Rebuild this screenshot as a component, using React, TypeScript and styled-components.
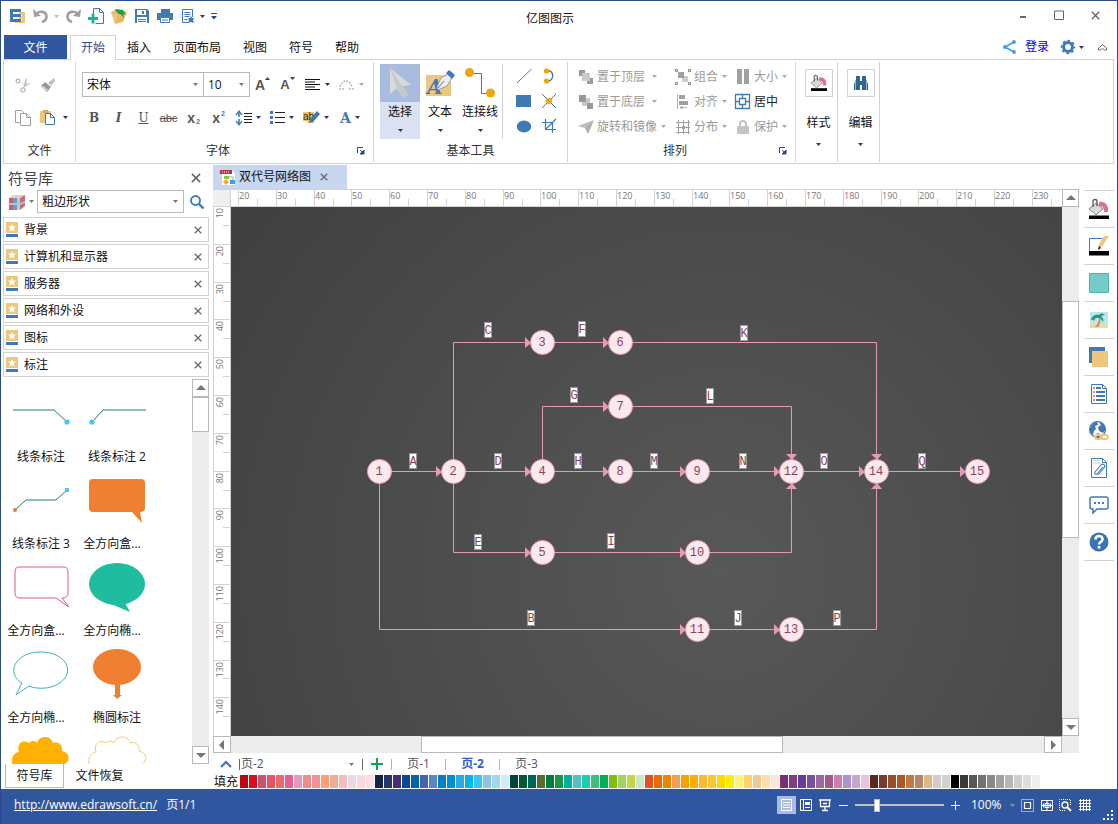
import React, { useLayoutEffect, useRef, useState } from "react";
import styled, { createGlobalStyle, css } from "styled-components";

const c = {
  navy: "#2b4a8c",
  blue: "#3156a0",
  icon: "#407ab5",
  line: "#d3d3d3",
  edge: "#b9b9b9",
  gray: "#a0a0a0",
  sand: "#eec77e",
  track: "#ececec",
};

const GlobalStyle = createGlobalStyle`
  *, *::before, *::after { box-sizing: border-box; }
  body {
    margin: 0;
    background: #fff;
    color: #111;
    font: 12px/16px "Open Sans", "Noto Sans CJK SC", sans-serif;
  }
  button, select, input { font: inherit; color: inherit; margin: 0; padding: 0; }
  button { background: none; border: 0; }
  svg { display: block; flex: none; overflow: visible; }
`;

/* ---------- shell ---------- */

const Window = styled.div`
  height: 100vh;
  min-height: 600px;
  display: flex;
  flex-direction: column;
  border: 1px solid ${c.navy};
  border-bottom: 0;
  background: #fff;
`;

const TitleBar = styled.header`
  display: grid;
  grid-template-columns: 1fr auto 1fr;
  align-items: center;
  height: 34px;
`;

const QuickAccess = styled.div`
  display: flex;
  align-items: center;
  padding: 0 0 4px 5px;
`;

const AppTitle = styled.h1`
  margin: 0;
  padding: 2px 18px 0 0;
  font-size: 12px;
  font-weight: 400;
`;

const WindowControls = styled.div`
  display: flex;
  justify-content: flex-end;
  padding: 0 4px 6px 0;
`;

const IconButton = styled.button<{ $w?: number; $h?: number; $tight?: boolean }>`
  display: flex;
  align-items: center;
  justify-content: center;
  gap: ${(p) => (p.$tight ? 0 : 4)}px;
  width: ${(p) => p.$w ?? 23}px;
  height: ${(p) => p.$h ?? 24}px;
`;

const TabRow = styled.nav`
  display: flex;
  align-items: center;
  height: 24px;
  padding: 0 8px 0 3px;
  position: relative;
  z-index: 1;
`;

const FileTab = styled.button`
  width: 63px;
  height: 24px;
  margin-right: 3px;
  padding-top: 1px;
  background: ${c.blue};
  color: #fff;
`;

const RibbonTab = styled.button<{ $active?: boolean }>`
  height: 25px;
  padding: 2px 11px 0;
  border: 0 solid ${c.line};
  ${(p) =>
    p.$active &&
    css`
      padding: 1px 10px 0;
      border-width: 1px 1px 0;
      background: #fff;
      color: ${c.navy};
    `}
`;

const TabRowEnd = styled.div`
  display: flex;
  align-items: center;
  gap: 9px;
  margin-left: auto;
`;

const LoginLink = styled.a`
  color: #0000f0;
  text-decoration: none;
`;

/* ---------- ribbon ---------- */

const Ribbon = styled.section`
  display: flex;
  height: 105px;
  margin: 0 3px 0 2px;
  padding: 2px 0 1px;
  border: 1px solid ${c.line};
`;

const Group = styled.div`
  display: flex;
  flex-direction: column;
  border-right: 1px solid ${c.line};
`;

const GroupTools = styled.div<{ $pad: string }>`
  display: flex;
  height: 77px;
  padding: ${(p) => p.$pad};
`;

const GroupLabel = styled.div<{ $launcher?: boolean }>`
  display: flex;
  align-items: center;
  height: 23px;
  padding: 1px 0 0 ${(p) => (p.$launcher ? 11 : 0)}px;
  color: #333;
  & > span {
    flex: 1;
    text-align: center;
  }
`;

const Rows = styled.div`
  display: flex;
  flex-direction: column;
`;

const Row = styled.div`
  display: flex;
  align-items: center;
  height: 33px;
`;

const SelectBox = styled.span<{ $w: number; $h: number; $plain?: boolean }>`
  display: grid;
  align-items: center;
  width: ${(p) => p.$w}px;
  height: ${(p) => p.$h}px;
  border: ${(p) => (p.$plain ? "0" : `1px solid ${c.edge}`)};
  & + & {
    border-left: 0;
  }
  & > * {
    grid-area: 1 / 1;
  }
  & > select {
    padding-left: ${(p) => (p.$plain ? 1 : 4)}px;
  }
  & > svg {
    justify-self: end;
    margin-right: ${(p) => (p.$plain ? 8 : 5)}px;
    pointer-events: none;
  }
`;

const NativeSelect = styled.select`
  appearance: none;
  width: 100%;
  height: 100%;
  border: 0;
  background: transparent;
`;

const Glyph = styled.span<{ $serif?: boolean; $bold?: boolean; $size?: number; $color?: string; $mark?: string; $italic?: boolean }>`
  font-family: ${(p) => (p.$serif ? '"DejaVu Serif", serif' : '"Liberation Sans", sans-serif')};
  font-size: ${(p) => p.$size ?? 12}px;
  font-weight: ${(p) => (p.$bold ? 700 : 400)};
  font-style: ${(p) => (p.$italic ? "italic" : "normal")};
  color: ${(p) => p.$color ?? "#555"};
  text-decoration: ${(p) => p.$mark ?? "none"};
`;

const Script = styled(Glyph)`
  line-height: 8px;
  align-self: center;
`;

const ScriptButton = styled(IconButton)<{ $up?: boolean }>`
  gap: 1px;
  ${Script} {
    padding: ${(p) => (p.$up ? "0 0 8px" : "8px 0 0")};
  }
`;

const BigTool = styled.button<{ $on?: boolean }>`
  display: grid;
  grid-template-rows: 38px 20px 17px;
  justify-items: center;
  align-items: center;
  width: 40px;
  height: 75px;
  white-space: nowrap;
  background: ${(p) => (p.$on ? "linear-gradient(#a9bbde 38px, #d9e1f3 38px)" : "none")};
`;

const ShapeGrid = styled.div`
  display: grid;
  grid-template-columns: repeat(2, 25px);
  grid-auto-rows: 25px;
  margin-left: 2px;
  padding-left: 8px;
  border-left: 1px solid ${c.line};
`;

const ArrangeGrid = styled.div`
  display: grid;
  grid-template-columns: 97px 60px 56px;
  grid-auto-rows: 25px;
`;

const ArrangeButton = styled.button<{ $live?: boolean; $min?: number }>`
  display: grid;
  grid-template-columns: 17px auto 9px;
  justify-content: start;
  align-items: center;
  column-gap: 2px;
  color: ${(p) => (p.$live ? "#222" : "#9a9a9a")};
  text-align: left;
  white-space: nowrap;
  & > span {
    min-width: ${(p) => p.$min ?? 0}px;
    padding-left: 1px;
  }
  & > svg {
    justify-self: center;
  }
`;

const TallTool = styled.button`
  display: grid;
  grid-template-rows: 28px 52px 0;
  align-content: start;
  justify-items: center;
  align-items: center;
  width: 41px;
  height: 77px;
  padding: 7px 0 0 4px;
  & > svg {
    margin-top: -10px;
  }
`;

const Tile = styled.span`
  display: grid;
  place-items: center;
  width: 28px;
  height: 28px;
  border: 1px solid ${c.line};
`;

/* ---------- body ---------- */

const Body = styled.main`
  flex: 1;
  min-height: 0;
  display: flex;
  padding: 0 3px 0 2px;
`;

const Library = styled.aside`
  width: 206px;
  margin-right: 4px;
  display: flex;
  flex-direction: column;
`;

const LibraryHeader = styled.div`
  display: flex;
  align-items: center;
  justify-content: space-between;
  height: 26px;
  padding: 2px 5px 0;
`;

const LibraryTitle = styled.h2`
  margin: 0;
  font-size: 15px;
  font-weight: 400;
  color: #444;
`;

const LibrarySearch = styled.div`
  display: flex;
  align-items: center;
  height: 23px;
  margin-bottom: 4px;
  padding-left: 2px;
`;

const CategoryList = styled.ul`
  display: grid;
  gap: 2px;
  margin: 0 0 2px;
  padding: 0;
  list-style: none;
`;

const Category = styled.li`
  display: flex;
  align-items: center;
  gap: 6px;
  height: 25px;
  padding: 0 0 0 2px;
  border: 1px solid ${c.line};
  & > button {
    margin-left: auto;
  }
`;

const ShapePane = styled.div`
  flex: 1;
  min-height: 0;
  display: flex;
  justify-content: space-between;
`;

const ShapeList = styled.div`
  display: grid;
  grid-template-columns: repeat(2, 76px);
  grid-auto-rows: 87px;
  align-content: start;
  padding-top: 4px;
  overflow: hidden;
`;

const ShapeCell = styled.figure`
  margin: 0;
  text-align: center;
`;

const ShapeName = styled.figcaption<{ $cut?: boolean }>`
  line-height: 20px;
  padding-right: ${(p) => (p.$cut ? 10 : 0)}px;
`;

const PanelTabs = styled.div`
  display: flex;
  height: 25px;
  padding: 0 2px 1px;
`;

const PanelTab = styled.button<{ $active?: boolean }>`
  width: ${(p) => (p.$active ? 59 : 71)}px;
  border: 0 solid ${c.edge};
  border-width: ${(p) => (p.$active ? "0 1px 1px" : "0")};
`;

const Workspace = styled.section`
  flex: 1;
  min-width: 0;
  display: flex;
  flex-direction: column;
  padding-top: 1px;
`;

const DocTab = styled.div`
  display: flex;
  align-items: center;
  width: 134px;
  height: 24px;
  padding-left: 7px;
  gap: 3px;
  background: #c7d7f0;
  white-space: nowrap;
`;

const Stage = styled.div`
  flex: 1;
  min-height: 0;
  display: grid;
  grid-template: 18px minmax(0, 1fr) 17px / 18px minmax(0, 1fr) 17px;
`;

const RulerCorner = styled.div`
  background: #efefef;
  border: solid ${c.line};
  border-width: 1px 1px 1px 0;
`;

const Ruler = styled.svg`
  width: 100%;
  height: 100%;
  overflow: hidden;
  font: 9px "Open Sans", sans-serif;
  fill: #777;
`;

const Canvas = styled.div`
  overflow: hidden;
  background: radial-gradient(circle at 59% 69%, #585858, #4e4e4e 260px, #404040 600px);
`;

const Diagram = styled.svg`
  width: 100%;
  height: 100%;
  overflow: hidden;
  font: 12px "Liberation Mono", monospace;
`;

const ScrollV = styled.div`
  display: flex;
  flex-direction: column;
  width: 17px;
  background: ${c.track};
`;

const ScrollH = styled.div`
  display: flex;
  height: 17px;
  background: ${c.track};
`;

const VScrollArea = styled(ScrollV)`
  grid-area: 1 / 3 / 3 / 4;
`;

const HScrollArea = styled(ScrollH)`
  grid-area: 3 / 1 / 4 / 3;
`;

const ScrollCorner = styled.div`
  grid-area: 3 / 3;
  background: ${c.track};
`;

const ScrollEnd = styled.button`
  display: grid;
  place-items: center;
  flex: 0 0 18px;
  border: 1px solid ${c.edge};
  background: #fff;
`;

const Grow = styled.div<{ $n: number; $thumb?: boolean }>`
  flex: ${(p) => p.$n} 1 0;
  ${(p) => p.$thumb && `background: #fff; border: 1px solid ${c.edge};`}
`;

const PageRow = styled.div`
  display: flex;
  align-items: center;
  height: 21px;
  padding-top: 1px;
  color: #555;
`;

const Bar = styled.i<{ $dark?: boolean }>`
  width: 1px;
  height: 11px;
  background: ${(p) => (p.$dark ? "#666" : "#b5b5b5")};
`;

const PageTab = styled.button<{ $active?: boolean }>`
  width: 53px;
  color: ${(p) => (p.$active ? "#2f5ec4" : "#555")};
  font-weight: ${(p) => (p.$active ? 700 : 400)};
`;

const Palette = styled.div`
  display: flex;
  align-items: center;
  height: 15px;
  overflow: hidden;
  white-space: nowrap;
`;

const PaletteLabel = styled.span`
  width: 27px;
  padding-left: 1px;
`;

const Swatch = styled.button<{ $color: string }>`
  flex: 0 0 8px;
  height: 13px;
  margin-right: 1px;
  background: ${(p) => p.$color};
`;

const SideTools = styled.aside`
  width: 30px;
  margin: 26px 0 0 5px;
  border-top: 1px solid ${c.line};
`;

const SideTool = styled.button`
  display: grid;
  place-items: center;
  width: 30px;
  height: 37px;
  border-bottom: 1px solid ${c.line};
`;

const StatusBar = styled.footer`
  display: flex;
  align-items: center;
  height: 35px;
  padding: 0 2px 3px 13px;
  background: ${c.blue};
  color: #fff;
`;

const SiteLink = styled.a`
  margin-right: 9px;
  color: #fff;
`;

const StatusTools = styled.div`
  display: flex;
  align-items: center;
  margin-left: auto;
`;

const StatusButton = styled.button<{ $on?: boolean }>`
  display: grid;
  place-items: center;
  width: 19px;
  height: 18px;
  background: ${(p) => (p.$on ? "#a9bbde" : "none")};
`;

const Zoom = styled.input`
  appearance: none;
  width: 89px;
  height: 14px;
  margin: 0 2px;
  background: linear-gradient(#c0c0c0, #c0c0c0) center / 100% 2px no-repeat;
  &::-webkit-slider-thumb {
    appearance: none;
    width: 6px;
    height: 13px;
    background: #fff;
    border: 1px solid #c0c0c0;
  }
`;

const ZoomLevel = styled.span`
  width: 37px;
  padding-left: 6px;
  margin-right: 8px;
`;

const ZoomCaret = styled.span`
  margin-right: 3px;
`;

const Grip = styled.div`
  align-self: flex-end;
  margin-left: 9px;
`;

/* ---------- icons ---------- */

type IcoProps = { w?: number; h?: number; children: React.ReactNode };
const Ico = ({ w = 16, h = 16, children }: IcoProps) => (
  <svg width={w} height={h} viewBox={`0 0 ${w} ${h}`} fill="none" aria-hidden="true">
    {children}
  </svg>
);

const Caret = ({ color = "#22386f" }: { color?: string }) => (
  <Ico w={5} h={3}><path d="M0 0h5L2.5 3z" fill={color} /></Ico>
);

const Close = ({ size = 9, color = "#666" }: { size?: number; color?: string }) => (
  <svg width={size} height={size} viewBox="0 0 9 9" stroke={color} strokeWidth="1.4" aria-hidden="true">
    <path d="M.8.8l7.4 7.4M8.2.8L.8 8.2" />
  </svg>
);

const Logo = () => (
  <Ico w={16}>
    <path d="M9 4h6v11H5v-2.500h7V11H9V8.500h3V6.500H9z" fill={c.sand} />
    <path d="M0 1h11v3H3v2h8v3H3v2h8v3H0z" fill={c.icon} />
  </Ico>
);
const Undo = ({ flip }: { flip?: boolean }) => (
  <Ico>
    <g transform={flip ? "matrix(-1 0 0 1 16 0)" : undefined}>
      <path d="M0 1l1 8 7-1z" fill={c.gray} />
      <path d="M3 6C6 2.500 13.500 3 13.500 8.500c0 2.500-1.500 4.500-4.500 5.500" stroke={c.gray} strokeWidth="2.600" />
    </g>
  </Ico>
);
const NewDoc = () => (
  <Ico>
    <path d="M5.500 6V.500h6l4 4v11h-8M11.500.500v4h4" stroke={c.icon} />
    <path d="M0 10.500h10M5 5.500v10" stroke="#18b690" strokeWidth="2.800" />
  </Ico>
);
const OpenDoc = () => (
  <Ico>
    <path d="M0 4l6-3 10 3-4 10-8 2z" fill="#e8b962" />
    <path d="M0 4l4 12 2-9z" fill={c.sand} />
    <path d="M4 1l8 1 3 5-3-1 1 5c-1-3-3-5-5-5-2-1-3-3-4-5z" fill="#18a04e" />
  </Ico>
);
const Save = () => (
  <Ico>
    <path d="M1 1h12l2 2v12H1z" fill={c.icon} />
    <path d="M3 2h9v5H3zM3 9h10v6H3z" fill="#fff" />
    <path d="M8 3h2v3H8zM4 11h8v1H4zM4 13h8v1H4z" fill={c.icon} />
  </Ico>
);
const Print = () => (
  <Ico>
    <path d="M4 1h9v4H4zM0 5h16v7h-3V9H3v3H0z" fill={c.icon} />
    <path d="M3.500 9.500h9v5h-9z" fill="#fff" stroke={c.icon} />
    <path d="M5 12h6" stroke={c.icon} />
  </Ico>
);
const Preview = () => (
  <Ico w={12}>
    <path d="M6 14.500H.5v-13h10V9M2.500 4.500h6M2.500 6.500h6M2.500 8.500h5M2.500 11.500h3" stroke={c.icon} />
    <path d="M9 8l1 2h2l-1 2 1 3-3-1-3 1 1-3-1-2h2z" fill={c.icon} />
  </Ico>
);
const Share = () => (
  <Ico w={13} h={14}>
    <path d="M11 2L2 7l9 5" stroke="#3ea0ea" strokeWidth="1.800" />
    <g fill="#3ea0ea"><circle cx="11" cy="2" r="1.900" /><circle cx="2" cy="7" r="2" /><circle cx="11" cy="12" r="1.900" /></g>
  </Ico>
);
const Gear = () => (
  <Ico w={14} h={14}>
    <circle cx="7" cy="7" r="4.400" stroke={c.icon} strokeWidth="3" />
    <circle cx="7" cy="7" r="6.400" stroke={c.icon} strokeWidth="1.600" strokeDasharray="2.700 2.320" strokeDashoffset="1.350" />
  </Ico>
);
const Collapse = () => (
  <Ico w={9} h={7}><path d="M.5 4L4.500.8 8.500 4v2H6.500L4.500 4.500 2.500 6h-2z" stroke="#666" /></Ico>
);

const Cut = () => (
  <Ico>
    <circle cx="3" cy="4" r="2" stroke={c.gray} /><circle cx="8" cy="13" r="2.200" stroke={c.gray} />
    <path d="M5 5l4 2 7-1-5 3-3 2 1-3zM9 7l2-6 1 1-1 5z" fill="#c2c2c2" />
  </Ico>
);
const Brush = () => (
  <Ico w={14} h={14}>
    <path d="M13 0l1 3-4 5-3-3z" fill="#c0c0c0" /><path d="M4 4l6 5-4 5-6-6z" fill="#999" /><path d="M1 9l5 4 1-1-5-4z" fill="#ddd" />
  </Ico>
);
const Copy = () => (
  <Ico>
    <path d="M5.500 12.500h-5v-12h6l3 3" stroke={c.gray} />
    <path d="M5.500 3.500h6l4 4v8h-10zM11.500 3.500v4h4" fill="#fff" stroke={c.gray} />
  </Ico>
);
const Paste = () => (
  <Ico w={15}>
    <path d="M0 1h11v12H0z" fill={c.sand} /><path d="M3 0h5v3H3z" fill="#d9ad60" />
    <path d="M5.500 3.500h5l4 4v7h-9zM10.500 3.500v4h4" fill="#fff" stroke={c.icon} />
  </Ico>
);
const SizeMark = ({ down }: { down?: boolean }) => (
  <Ico w={5} h={16}><path d={down ? "M0 0h5L2.500 3z" : "M0 3h5L2.500 0z"} fill="#444" /></Ico>
);
const Align = () => (
  <Ico h={11}><path d="M0 .5h15M0 3h10M0 5.500h15M0 8h10M0 10.500h15" stroke="#111" /></Ico>
);
const Curve = () => (
  <Ico h={11}><path d="M1 8C4 0 10 0 13 8M0 10h5M10 10h5" stroke="#bbb" strokeWidth="1.500" strokeDasharray="2 1" /></Ico>
);
const Spacing = () => (
  <Ico><path d="M3 1v14" stroke={c.icon} strokeWidth="1.600" strokeDasharray="6 2" /><path d="M0 5l3-4 3 4M0 11l3 4 3-4" stroke={c.icon} strokeWidth="1.300" /><path d="M8 3.500h8M8 6.500h8M8 9.500h8M8 12.500h8" stroke="#222" /></Ico>
);
const Bullets = () => (
  <Ico w={15} h={13}><path d="M0 0h3v3H0zM0 5h3v3H0zM0 10h3v3H0z" fill={c.icon} /><path d="M5 1.500h10M5 6.500h10M5 11.500h10" stroke="#222" /></Ico>
);
const Highlight = () => (
  <Ico w={17} h={13}>
    <path d="M0 1h11v11H5L3 10H0z" fill="#f3c35f" />
    <text x="0" y="9" fontSize="10" fontFamily="Liberation Sans" fill="#222">ab</text>
    <path d="M14 0l3 3-7 8-4 1 1-4z" fill={c.icon} />
  </Ico>
);
const Launcher = () => (
  <Ico w={8} h={8}><path d="M.5 6V.5H6" stroke={c.navy} /><path d="M3 3l3 3M7 3v4H3z" stroke={c.navy} fill={c.navy} /></Ico>
);

const Pointer = () => (
  <Ico w={24} h={30}><path d="M2 0l21 17-9 1 6 9-5 3-6-10-7 6z" fill="#d9dadb" /><path d="M2 0l12 18 6 9-5 3-6-10z" fill="#c6c8ca" /></Ico>
);
const TextTool = () => (
  <Ico w={29} h={26}>
    <path d="M0 5h25v21H0z" fill={c.sand} />
    <text x="1" y="24" fontFamily="DejaVu Serif" fontWeight="700" fontStyle="italic" fontSize="20" fill={c.icon}>A</text>
    <path d="M11 17l4-9 7-4 4 4-5 8-9 4z" fill="#e9edf0" stroke="#98a0a6" /><path d="M12 18l6-7" stroke="#777" />
    <path d="M20 3l3-3 6 5-3 4z" fill={c.icon} />
  </Ico>
);
const Connector = () => (
  <Ico w={30} h={30}><path d="M8 5.500h8.500v20H25" stroke={c.icon} /><circle cx="4.500" cy="4.500" r="4.500" fill="#f0a30a" /><circle cx="25.500" cy="25" r="4.500" fill="#f0a30a" /></Ico>
);
const basicShapes: React.ReactNode[] = [
  <Ico key="line"><path d="M1 15L15.500 1" stroke={c.icon} /></Ico>,
  <Ico key="arc" w={10}><path d="M2 2c9 1 9 10 0 12" stroke={c.icon} strokeWidth="1.300" /><circle cx="2.500" cy="3" r="2.600" fill="#f0a30a" /><circle cx="2.500" cy="13" r="2.600" fill="#f0a30a" /></Ico>,
  <Ico key="rect" h={12}><path d="M0 0h15v12H0z" fill={c.icon} /></Ico>,
  <Ico key="cross"><path d="M1 1l14 14M15 1L1 15" stroke={c.icon} /><circle cx="8" cy="8" r="3" fill="#f0a30a" /></Ico>,
  <Ico key="ellipse" h={13}><ellipse cx="8" cy="6.500" rx="7.200" ry="6" fill={c.icon} /></Ico>,
  <Ico key="crop"><path d="M4.500 1v10.500H15M1 4.500h10.500V15M4.500 11.500L15 1" stroke={c.icon} strokeWidth="1.200" /></Ico>,
];

const ToFront = () => (
  <Ico w={14} h={14}><path d="M0 0h6v6H0zM8 8h6v6H8z" fill="#9a9a9a" /><path d="M3 3h8v8H3z" fill="#c9c9c9" /></Ico>
);
const ToBack = () => (
  <Ico w={14} h={14}><path d="M5 3h6v5H8v3H3V5z" fill="#c9c9c9" /><path d="M0 0h7v7H0zM8 8h6v6H8z" fill="#999" /></Ico>
);
const Rotate = () => (
  <Ico h={14}><path d="M16 0L0 6l7 2z" fill="#bdbdbd" /><path d="M16 0L7 8l3 6z" fill="#adadad" /></Ico>
);
const GroupIcon = () => (
  <Ico>
    <path d="M.5.500h2v2h-2zM13.500.500h2v2h-2zM.5 13.500h2v2h-2zM13.500 13.500h2v2h-2z" stroke="#888" />
    <path d="M3 3h6v6H3z" fill="#a2a2a2" /><path d="M7 7h6v6H7z" fill="#ccc" /><path d="M7 7h2v2H7z" fill="#999" />
  </Ico>
);
const AlignIcon = () => (
  <Ico w={11} h={15}><path d="M.5 0v15M3 13.500h7M3 13.500l2-1.500v3z" stroke="#b0b0b0" /><path d="M2 1h6v4H2zM2 7h9v4H2z" fill="#a0a0a0" /></Ico>
);
const Distribute = () => (
  <Ico w={14} h={14}><path d="M0 2.500h14M0 7.500h14M0 12.500h14M2.500 0v14M7.500 0v14M12.500 0v14" stroke="#a0a0a0" /><path d="M6 6h3v3H6z" fill="#a0a0a0" /></Ico>
);
const SizeIcon = () => (
  <Ico w={14} h={15}><path d="M1 0h5v15H1zM8 0h5v15H8z" fill="#a0a0a0" /></Ico>
);
const CenterIcon = () => (
  <Ico w={15} h={15}><path d="M.5.500h14v14H.5zM4.500 4.500h6v6h-6zM7.500 0v4M7.500 11v4M0 7.500h4M11 7.500h4" stroke={c.icon} strokeWidth="1.300" /></Ico>
);
const Lock = () => (
  <Ico w={12} h={14}><path d="M3 7V4c0-4 6-4 6 0v3" stroke="#c4c4c4" strokeWidth="2" /><path d="M0 6h12v8H0z" fill="#c4c4c4" /></Ico>
);
const Fill = ({ w = 20 }: { w?: number }) => (
  <svg width={w} height={w} viewBox="0 0 20 20" aria-hidden="true">
    <path d="M10 3c6-1 10 3 9 10h-4c0-5-2-6-5-6z" fill="#de6f98" />
    <path d="M7 4l7 6-7 6-7-6z" fill="#d9d9d9" stroke="#888" />
    <path d="M4 8V2c0-2 4-2 4 0v5" fill="none" stroke="#555" strokeWidth="1.300" />
    <path d="M0 16.500h20V20H0z" />
  </svg>
);
const Binoculars = () => (
  <Ico w={16} h={16}>
    <path d="M3 1h4v5h2V1h4v4l2 4v6H9v-5H7v5H1V9l2-4z" fill="#2f6496" />
    <path d="M2.500 7v8M13.500 7v8" stroke="#9bb8d3" />
  </Ico>
);

const Books = () => (
  <Ico>
    <path d="M0 4l4-3h12l-4 3z" fill="#d9d4cc" />
    <path d="M0 4h4v12H0z" fill="#dc5a56" /><path d="M4 4h4v12H4z" fill="#5aa0dc" /><path d="M8 4h3v12H8z" fill="#eec77e" /><path d="M11 4l5-3v11l-5 4z" fill="#c86b80" />
    <path d="M0 9h11l5-2v2l-5 2H0z" fill="#8fd0e4" />
  </Ico>
);
const Search = () => (
  <Ico w={14} h={14}><circle cx="5.500" cy="5.500" r="4.500" stroke={c.icon} strokeWidth="1.900" /><path d="M9 9l4.500 4.500" stroke={c.icon} strokeWidth="2.400" /></Ico>
);
const Star = () => (
  <Ico w={12} h={15}>
    <path d="M0 0h12v11H0z" fill={c.sand} /><path d="M0 12h12v3H0z" fill={c.icon} />
    <path d="M6 2l1.100 2.600 2.900.2-2.200 1.800.8 2.800L6 7.900 3.400 9.400l.8-2.800L2 4.800l2.900-.2z" fill="#fff" />
  </Ico>
);
const DocIcon = () => (
  <Ico>
    <path d="M2 1h10l3 4v11H2z" fill="#fff" /><path d="M0 1h12v4H0z" fill="#b6353e" /><path d="M2 3h8" stroke="#fff" strokeDasharray="1 1" />
    <path d="M4 7h5v3H4z" fill="#8cc63f" /><path d="M6 10l3 3-3 3-3-3z" fill="#f5a91d" /><path d="M10 11h5v4h-5z" fill="#3f9bf0" /><path d="M9 8h4v3" stroke="#aaa" />
  </Ico>
);

const ScrollArrow = ({ d }: { d: "up" | "down" | "left" | "right" }) => {
  const turn = { up: 0, right: 90, down: 180, left: 270 }[d];
  return (
    <Ico w={10} h={10}><path d="M0 7h10L5 2z" fill="#777" transform={`rotate(${turn} 5 5)`} /></Ico>
  );
};

const sideIcons: [string, React.ReactNode][] = [
  ["填充", <Fill key="i" />],
  ["线条", (
    <Ico w={20} h={20} key="i">
      <path d="M.5 14.500v-12H14" stroke={c.icon} /><path d="M0 15h20v4.500H0z" fill="#000" />
      <path d="M15 0h5l-7 11-4 3 1-6z" fill={c.sand} /><path d="M10 10l-1 4 3-2z" fill="#222" />
    </Ico>
  )],
  ["主题颜色", <Ico w={20} h={20} key="i"><path d="M.5.500h19v19H.5z" fill="#74ccc8" stroke="#4fb3ae" /></Ico>],
  ["图片", (
    <Ico w={18} h={16} key="i">
      <path d="M0 0h18v16H0z" fill="#bfe2f4" /><path d="M0 12c6-3 12-1 18 0v4H0z" fill="#ecd9a8" />
      <path d="M9 5c0 4-1 7-4 10h3c2-3 3-6 2-10z" fill="#c98b5a" />
      <path d="M1 8c1-5 5-6 8-5 1-2 4-2 6 0-3 0-3 1-4 2 2 0 3 3 2 5-2-3-3-4-4-4-3-1-4 0-5 3-1-2-2-1-3-1z" fill="#219a78" />
    </Ico>
  )],
  ["图层", <Ico w={20} h={20} key="i"><path d="M0 0h16v16H0z" fill={c.icon} /><path d="M3 4h16v16H3z" fill={c.sand} /></Ico>],
  ["属性", (
    <Ico w={16} h={20} key="i">
      <path d="M.5.500h11l4 4v15H.5zM11.500.500v4h4" stroke={c.icon} />
      <path d="M2 4h2M2 8h2M2 12h2M2 16h2" stroke="#ef8090" strokeWidth="2" /><path d="M5 4h5M5 8h9M5 12h9M5 16h9" stroke={c.icon} strokeWidth="1.800" />
    </Ico>
  )],
  ["超链接", (
    <Ico w={20} h={20} key="i">
      <circle cx="8.500" cy="8.500" r="7.900" fill="#fff" stroke={c.icon} strokeWidth="1.200" />
      <path d="M1 7c2-5 5-6 7-6l1 3-3 1 1 3-2 2-1 4C1 12 0 9 1 7zM10 1c4 0 6 3 7 7l-3 4-4-2-1-4 3-2zM8 12l3 1-1 4H8z" fill={c.icon} />
      <rect x="6" y="14" width="7" height="4" rx="2" stroke={c.sand} strokeWidth="2" /><rect x="12" y="14" width="7" height="4" rx="2" stroke={c.sand} strokeWidth="2" />
    </Ico>
  )],
  ["附件", (
    <Ico w={16} h={20} key="i">
      <path d="M.5.500h11l4 4v15H.5zM11.500.500v4h4" stroke={c.icon} /><path d="M2 5h8M2 2.500h7" stroke="#ccc" />
      <path d="M12 9l-6 7c-1 1-3 0-2-2l6-7c2-2 5 0 3 3l-6 7M11 10l-4 5" stroke={c.icon} strokeWidth="1.100" />
    </Ico>
  )],
  ["批注", (
    <Ico w={20} h={18} key="i">
      <path d="M3 1h14q2 0 2 2v8q0 2-2 2H8l-4 4v-4H3q-2 0-2-2V3q0-2 2-2z" stroke={c.icon} strokeWidth="1.500" />
      <path d="M5 6h2v2H5zM9 6h2v2H9zM13 6h2v2h-2z" fill={c.icon} />
    </Ico>
  )],
  ["帮助", (
    <Ico w={20} h={20} key="i">
      <circle cx="10" cy="10" r="9.500" fill="#3a74b4" />
      <path d="M6.500 7.500c0-5 7.500-4.500 7 0C13.500 10 10 10 10 12.500" stroke="#fff" strokeWidth="2.600" /><path d="M8.700 14h2.700v2.600H8.700z" fill="#fff" />
    </Ico>
  )],
];

/* ---------- data ---------- */

const categories = ["背景", "计算机和显示器", "服务器", "网络和外设", "图标", "标注"];
const cloud = "M18 45C10 40 12 28 20 27c-3-8 4-13 10-9 3-3 7-2 8 0 2-8 14-8 16 0 7-2 10 4 9 8 10 2 8 14-1 14l-3 5z";

const libraryShapes: [string, React.ReactNode][] = [
  ["线条标注", <><path d="M10 27h41l12 11" stroke="#1c7d6c" /><circle cx="64" cy="39" r="2.600" fill="#4fc0f0" /></>],
  ["线条标注 2", <><path d="M67 27H24L14 38" stroke="#1c7d6c" /><circle cx="13" cy="39" r="2.600" fill="#4fc0f0" /></>],
  ["线条标注 3", <><path d="M12 40l11-10h30l11-10" stroke="#1c7d6c" /><circle cx="12" cy="40" r="2" fill="#f0733a" /><circle cx="64" cy="20" r="2.200" fill="#4fc0f0" /></>],
  ["全方向盒...", <path d="M14 9h48q4 0 4 4v25q0 4-5 4l2 11-10-11H14q-4 0-4-4V13q0-4 4-4z" fill="#ef7f31" />],
  ["全方向盒...", <path d="M16 10h45q4 0 4 5v21q0 5-6 5l7 9-13-9H17q-5 0-5-5V15q0-5 4-5z" stroke="#dc5c7c" />],
  ["全方向椭...", <><ellipse cx="38" cy="27" rx="28" ry="21" fill="#1fbc9f" /><path d="M32 47l19 8-6-11z" fill="#1fbc9f" /></>],
  ["全方向椭...", <path d="M19 39C3 30 11 8 38 8s37 24 13 34c-8 3-18 3-25 0L13 51z" stroke="#3fb0b4" />],
  ["椭圆标注", <><ellipse cx="38" cy="23" rx="24" ry="18" fill="#ef7f31" /><path d="M36 40h5v11h2l-5 4-4-4h2z" fill="#ef7f31" /></>],
];

const cloudShapes: [string, React.ReactNode][] = [
  ["云形标注", <path d={cloud} fill="#ffb000" transform="translate(-4 -6)" />],
  ["云形标注 2", <path d={cloud} stroke="#f8cb66" transform="translate(-3 -6)" />],
];

type Pt = [number, number];
const nodes: Record<number, Pt> = {
  1: [148, 264], 2: [222, 264], 3: [311, 135], 4: [311, 264], 5: [311, 345],
  6: [389, 135], 7: [389, 199], 8: [389, 264], 9: [466, 264], 10: [466, 345],
  11: [466, 422], 12: [560, 264], 13: [560, 422], 14: [645, 264], 15: [746, 264],
};
const edges: { a: number; b: number; name: string; at: Pt; bend?: "vh" | "hv" }[] = [
  { a: 1, b: 2, name: "A", at: [178, 246] },
  { a: 1, b: 11, name: "B", at: [296, 403], bend: "vh" },
  { a: 2, b: 3, name: "C", at: [253, 115], bend: "vh" },
  { a: 2, b: 4, name: "D", at: [263, 246] },
  { a: 2, b: 5, name: "E", at: [243, 327], bend: "vh" },
  { a: 3, b: 6, name: "F", at: [347, 114] },
  { a: 4, b: 7, name: "G", at: [339, 180], bend: "vh" },
  { a: 4, b: 8, name: "H", at: [343, 246] },
  { a: 5, b: 10, name: "I", at: [376, 326] },
  { a: 11, b: 13, name: "J", at: [503, 403] },
  { a: 6, b: 14, name: "K", at: [509, 118], bend: "hv" },
  { a: 7, b: 12, name: "L", at: [475, 181], bend: "hv" },
  { a: 8, b: 9, name: "M", at: [419, 246] },
  { a: 9, b: 12, name: "N", at: [508, 246] },
  { a: 10, b: 12, name: "", at: [0, 0], bend: "hv" },
  { a: 12, b: 14, name: "O", at: [589, 246] },
  { a: 13, b: 14, name: "P", at: [602, 403], bend: "hv" },
  { a: 14, b: 15, name: "Q", at: [687, 246] },
];

const palette = (
  "be0712 dd0b1c ca5078 e9515f ec686e e75d97 e29bb8 ee8d87 f18f9b ff9e78 f0ab95 f5bcbc ead7e8 fdd6e3 fcdfe2 " +
  "12224f 20366f 472c79 0a4992 0065a9 4163b0 5b85c4 007fcb 0090d0 30a8e0 00b4f0 35c5f7 8ec2ea 9fd8ed d1ecf6 " +
  "00453a 005931 00655f 566c32 007a43 1b9742 00ada0 54bfc1 1dcdb2 48b97e 00b055 7fbc10 a2d165 bed742 cae7c9 " +
  "e6501c ee6a00 f08200 f49b56 f3a400 ffae00 ffb833 fbc72f ffd800 ffec00 fff380 fdd26f eccb97 ffdcab fde7d0 " +
  "7b2e75 843c86 663d96 7852a0 9d68a4 a15a90 d07cb4 a993d0 c9a4cb ecc1dd " +
  "5a291b 763b30 994f2c ae5626 c17843 b6866b deb887 d6cac6 cbd5cf " +
  "000000 3e3739 595757 727171 898989 9fa0a0 b5b6b6 cdcece dcdddd efefef"
).split(" ");

const MM10 = 37.8;

/* ---------- parts ---------- */

const Picker = ({ w, h = 25, label, options, plain }: { w: number; h?: number; label: string; options: string[]; plain?: boolean }) => (
  <SelectBox $w={w} $h={h} $plain={plain}>
    <NativeSelect aria-label={label}>
      {options.map((o) => <option key={o}>{o}</option>)}
    </NativeSelect>
    <Caret color="#777" />
  </SelectBox>
);

/* Follows the rendered length of a ruler so that it only draws the marks that fit. */
const useRulerLength = (side: "width" | "height") => {
  const ref = useRef<SVGSVGElement>(null);
  const [length, setLength] = useState(0);
  useLayoutEffect(() => {
    const el = ref.current;
    if (!el) return;
    const measure = () => setLength(el.getBoundingClientRect()[side]);
    measure();
    const watcher = new ResizeObserver(measure);
    watcher.observe(el);
    return () => watcher.disconnect();
  }, [side]);
  return { ref, length };
};

const HorizontalRuler = () => {
  const { ref, length } = useRulerLength("width");
  const count = Math.max(0, Math.floor((length - 26) / MM10) + 1);
  return (
    <Ruler ref={ref} aria-hidden="true">
      <path d="M0 .5h4000M0 17.500h4000" stroke={c.line} />
      {Array.from({ length: count }, (_, i) => {
        const x = Math.round(7 + i * MM10);
        const mid = Math.round(7 + (i + 0.5) * MM10);
        return (
          <g key={i}>
            <path d={`M${x} 1v16M${mid} 10v7`} stroke={c.line} shapeRendering="crispEdges" />
            <text x={x + 1} y="10">{20 + i * 10}</text>
          </g>
        );
      })}
    </Ruler>
  );
};

const VerticalRuler = () => {
  const { ref, length } = useRulerLength("height");
  const count = Math.max(0, Math.floor((length - 20) / MM10) + 1);
  return (
    <Ruler ref={ref} aria-hidden="true">
      <path d="M.5 0v4000M17.500 0v4000" stroke={c.line} />
      {Array.from({ length: count }, (_, i) => {
        const y = Math.round(i * MM10) - 1;
        const mid = Math.round((i + 0.5) * MM10) - 1;
        return (
          <g key={i}>
            <path d={`M0 ${y}h17M10 ${mid}h7`} stroke={c.line} shapeRendering="crispEdges" />
            <text transform={`translate(10 ${y + 2}) rotate(-90)`} textAnchor="end">{10 + i * 10}</text>
          </g>
        );
      })}
    </Ruler>
  );
};

const EdgeLine = ({ a, b, bend }: { a: Pt; b: Pt; bend?: "vh" | "hv" }) => {
  const mid = bend === "vh" ? `V${b[1]}H${b[0]}` : bend === "hv" ? `H${b[0]}V${b[1]}` : `H${b[0]}`;
  const [x, y] = b;
  let head = `M${x - 17} ${y - 5}v11l6 -5z`;
  if (bend === "hv") {
    head = a[1] < y ? `M${x - 5} ${y - 17}h11l-5 6z` : `M${x - 5} ${y + 18}h11l-5 -6z`;
  }
  return (
    <>
      <path d={`M${a[0]} ${a[1]}${mid}`} fill="none" stroke="#e79ab3" transform="translate(.5 .5)" />
      <path d={head} fill="#e79ab3" />
    </>
  );
};

const NetworkDiagram = () => (
  <Diagram role="img" aria-label="双代号网络图">
    {edges.map((e) => <EdgeLine key={`${e.a}-${e.b}`} a={nodes[e.a]} b={nodes[e.b]} bend={e.bend} />)}
    {Object.entries(nodes).map(([n, [x, y]]) => (
      <g key={n}>
        <circle cx={x + 0.5} cy={y + 0.5} r="12" fill="#fbe9ee" stroke="#e79ab3" />
        <text x={x} y={y + 4} textAnchor="middle" fill="#8d3f58">{n}</text>
      </g>
    ))}
    {edges.filter((e) => e.name).map((e) => (
      <g key={e.name}>
        <rect x={e.at[0] + 0.5} y={e.at[1] + 0.5} width="7" height="15" fill="#fff" stroke="#999" />
        <text x={e.at[0] + 4} y={e.at[1] + 12} textAnchor="middle" fill="#8d3f58">{e.name}</text>
      </g>
    ))}
  </Diagram>
);

const arrange: { name: string; icon: React.ReactNode; live?: boolean; min?: number }[] = [
  { name: "置于顶层", icon: <ToFront />, min: 52 },
  { name: "组合", icon: <GroupIcon /> },
  { name: "大小", icon: <SizeIcon /> },
  { name: "置于底层", icon: <ToBack />, min: 52 },
  { name: "对齐", icon: <AlignIcon /> },
  { name: "居中", icon: <CenterIcon />, live: true },
  { name: "旋转和镜像", icon: <Rotate /> },
  { name: "分布", icon: <Distribute /> },
  { name: "保护", icon: <Lock /> },
];

const RibbonBar = () => (
  <Ribbon>
    <Group>
      <GroupTools $pad="6px 5px 0 6px">
        <Rows>
          <Row>
            <IconButton $w={25} aria-label="剪切"><Cut /></IconButton>
            <IconButton $w={25} aria-label="格式刷"><Brush /></IconButton>
          </Row>
          <Row>
            <IconButton $w={25} aria-label="复制"><Copy /></IconButton>
            <IconButton $w={25} aria-label="粘贴"><Paste /></IconButton>
            <IconButton $w={10} aria-label="粘贴选项"><Caret /></IconButton>
          </Row>
        </Rows>
      </GroupTools>
      <GroupLabel><span>文件</span></GroupLabel>
    </Group>

    <Group>
      <GroupTools $pad="6px 5px 0 6px">
        <Rows>
          <Row>
            <Picker w={122} label="字体" options={["宋体", "黑体"]} />
            <Picker w={46} label="字号" options={["10", "12", "14"]} />
            <IconButton $w={25} $tight aria-label="增大字号"><Glyph $bold $size={14}>A</Glyph><SizeMark /></IconButton>
            <IconButton $w={25} $tight aria-label="减小字号"><Glyph $bold $size={13}>A</Glyph><SizeMark down /></IconButton>
            <IconButton $w={34} aria-label="对齐"><Align /><Caret /></IconButton>
            <IconButton $w={34} aria-label="曲线文字"><Curve /><Caret color="#aaa" /></IconButton>
          </Row>
          <Row>
            <IconButton $w={24} aria-label="粗体"><Glyph $serif $bold>B</Glyph></IconButton>
            <IconButton $w={25} aria-label="斜体"><Glyph $serif $bold $italic>I</Glyph></IconButton>
            <IconButton $w={25} aria-label="下划线"><Glyph $serif $mark="underline">U</Glyph></IconButton>
            <IconButton $w={25} aria-label="删除线"><Glyph $size={11} $mark="line-through">abc</Glyph></IconButton>
            <ScriptButton $w={25} aria-label="下标"><Glyph $bold $size={14}>x</Glyph><Script $bold $size={7} $color={c.icon}>2</Script></ScriptButton>
            <ScriptButton $w={25} $up aria-label="上标"><Glyph $bold $size={14}>x</Glyph><Script $bold $size={7} $color={c.icon}>2</Script></ScriptButton>
            <IconButton $w={34} aria-label="行距"><Spacing /><Caret /></IconButton>
            <IconButton $w={34} aria-label="项目符号"><Bullets /><Caret /></IconButton>
            <IconButton $w={34} aria-label="突出显示"><Highlight /><Caret /></IconButton>
            <IconButton $w={34} aria-label="字体颜色"><Glyph $serif $bold $size={14} $color={c.icon}>A</Glyph><Caret /></IconButton>
          </Row>
        </Rows>
      </GroupTools>
      <GroupLabel $launcher><span>字体</span><IconButton $w={24} $h={16} aria-label="字体设置"><Launcher /></IconButton></GroupLabel>
    </Group>

    <Group>
      <GroupTools $pad="2px 6px 0 6px">
        <BigTool $on><Pointer />选择<Caret /></BigTool>
        <BigTool><TextTool />文本<Caret /></BigTool>
        <BigTool><Connector />连接线<Caret /></BigTool>
        <ShapeGrid>
          {basicShapes.map((s, i) => (
            <IconButton key={i} $w={25} aria-label={["直线", "弧线", "矩形", "交叉", "椭圆", "裁剪"][i]}>{s}</IconButton>
          ))}
        </ShapeGrid>
      </GroupTools>
      <GroupLabel><span>基本工具</span></GroupLabel>
    </Group>

    <Group>
      <GroupTools $pad="2px 5px 0 9px">
        <ArrangeGrid>
          {arrange.map((t) => (
            <ArrangeButton key={t.name} $live={t.live} $min={t.min}>
              {t.icon}
              <span>{t.name}</span>
              {!t.live && <Caret color="#aaa" />}
            </ArrangeButton>
          ))}
        </ArrangeGrid>
      </GroupTools>
      <GroupLabel $launcher><span>排列</span><IconButton $w={24} $h={16} aria-label="排列设置"><Launcher /></IconButton></GroupLabel>
    </Group>

    <Group><TallTool><Tile><Fill w={16} /></Tile>样式<Caret /></TallTool></Group>
    <Group><TallTool><Tile><Binoculars /></Tile>编辑<Caret /></TallTool></Group>
  </Ribbon>
);

const LibraryPanel = () => (
  <Library>
    <LibraryHeader>
      <LibraryTitle>符号库</LibraryTitle>
      <IconButton $w={16} aria-label="关闭符号库"><Close size={10} /></IconButton>
    </LibraryHeader>
    <LibrarySearch>
      <IconButton $w={32} aria-label="选择符号库"><Books /><Caret color="#777" /></IconButton>
      <Picker w={147} h={23} label="符号分类" options={["粗边形状", "基本形状"]} />
      <IconButton $w={25} aria-label="搜索"><Search /></IconButton>
    </LibrarySearch>
    <CategoryList>
      {categories.map((name) => (
        <Category key={name}>
          <Star />{name}
          <IconButton $w={20} $h={20} aria-label={`关闭${name}`}><Close size={8} /></IconButton>
        </Category>
      ))}
    </CategoryList>
    <ShapePane>
      <ShapeList>
        {libraryShapes.map(([name, art], i) => (
          <ShapeCell key={i}>
            <Ico w={76} h={64}>{art}</Ico>
            <ShapeName $cut={name.endsWith("...")}>{name}</ShapeName>
          </ShapeCell>
        ))}
        {cloudShapes.map(([name, art]) => (
          <ShapeCell key={name} aria-label={name}>
            <Ico w={76} h={64}>{art}</Ico>
          </ShapeCell>
        ))}
      </ShapeList>
      <ScrollV>
        <ScrollEnd aria-label="向上滚动"><ScrollArrow d="up" /></ScrollEnd>
        <Grow $n={33} $thumb />
        <Grow $n={316} />
        <ScrollEnd aria-label="向下滚动"><ScrollArrow d="down" /></ScrollEnd>
      </ScrollV>
    </ShapePane>
    <PanelTabs>
      <PanelTab $active>符号库</PanelTab>
      <PanelTab>文件恢复</PanelTab>
    </PanelTabs>
  </Library>
);

const DocumentArea = () => (
  <Workspace>
    <DocTab>
      <DocIcon />双代号网络图
      <IconButton $w={20} $h={20} aria-label="关闭文档"><Close size={8} /></IconButton>
    </DocTab>
    <Stage>
      <RulerCorner />
      <HorizontalRuler />
      <VScrollArea>
        <ScrollEnd aria-label="向上滚动"><ScrollArrow d="up" /></ScrollEnd>
        <Grow $n={94} />
        <Grow $n={236} $thumb />
        <Grow $n={181} />
        <ScrollEnd aria-label="向下滚动"><ScrollArrow d="down" /></ScrollEnd>
      </VScrollArea>
      <VerticalRuler />
      <Canvas><NetworkDiagram /></Canvas>
      <HScrollArea>
        <ScrollEnd aria-label="向左滚动"><ScrollArrow d="left" /></ScrollEnd>
        <Grow $n={190} />
        <Grow $n={361} $thumb />
        <Grow $n={262} />
        <ScrollEnd aria-label="向右滚动"><ScrollArrow d="right" /></ScrollEnd>
      </HScrollArea>
      <ScrollCorner />
    </Stage>
    <PageRow>
      <IconButton $w={26} $h={20} aria-label="展开页面"><Ico w={12} h={7}><path d="M1 6l5-5 5 5" stroke={c.icon} strokeWidth="2.200" /></Ico></IconButton>
      <Bar $dark />
      <Picker w={122} h={18} plain label="当前页" options={["页-2", "页-1", "页-3"]} />
      <Bar $dark />
      <IconButton $w={28} $h={20} aria-label="添加页面"><Ico w={12} h={12}><path d="M0 6h12M6 0v12" stroke="#00a84f" strokeWidth="2" /></Ico></IconButton>
      <Bar />
      <PageTab>页-1</PageTab>
      <Bar />
      <PageTab $active>页-2</PageTab>
      <Bar />
      <PageTab>页-3</PageTab>
    </PageRow>
    <Palette>
      <PaletteLabel>填充</PaletteLabel>
      {palette.map((p) => <Swatch key={p} $color={`#${p}`} aria-label={`#${p}`} />)}
    </Palette>
  </Workspace>
);

const Status = () => (
  <StatusBar>
    <SiteLink href="http://www.edrawsoft.cn/">http://www.edrawsoft.cn/</SiteLink>
    <span>页1/1</span>
    <StatusTools>
      <StatusButton $on aria-label="普通视图"><Ico w={11} h={12}><path d="M.5.500h10v11H.5zM2 3.500h7M2 6h7M2 8.500h7" stroke="#fff" /></Ico></StatusButton>
      <StatusButton aria-label="大纲视图"><Ico w={12} h={12}><path d="M.5.500h11v11H.5zM3.500 0v12M5 8.500h5" stroke="#fff" /><path d="M5 3h5v3H5z" fill="#fff" /></Ico></StatusButton>
      <StatusButton aria-label="演示"><Ico w={12} h={12}><path d="M0 1h12M1.500 1v6.500h9V1M4 4.500h4M6 8v3M3 11.500h6" stroke="#fff" strokeWidth="1.300" /></Ico></StatusButton>
      <StatusButton aria-label="缩小"><Ico w={9} h={9}><path d="M0 4.500h9" stroke="#fff" /></Ico></StatusButton>
      <Zoom type="range" min="0" max="400" defaultValue="90" aria-label="缩放" />
      <StatusButton aria-label="放大"><Ico w={9} h={9}><path d="M0 4.500h9M4.500 0v9" stroke="#fff" /></Ico></StatusButton>
      <ZoomLevel>100%</ZoomLevel>
      <ZoomCaret><Caret color="#8f8f8f" /></ZoomCaret>
      <StatusButton aria-label="适合页面"><Ico w={13} h={13}><path d="M.5.500h12v12H.5z" stroke="#fff" strokeDasharray="1 1" /><path d="M3.500 3.500h6v6h-6z" stroke="#fff" strokeWidth="1.200" /></Ico></StatusButton>
      <StatusButton aria-label="适合宽度"><Ico w={12} h={11}><path d="M.5.500h11v10H.5zM4 3.500h4v4H4zM0 5.500h12M2.500 3.500v4M9.500 3.500v4M6 1v9" stroke="#fff" /></Ico></StatusButton>
      <StatusButton aria-label="区域缩放"><Ico w={13} h={13}><path d="M11.500 6V.500H.500v11H6" stroke="#fff" strokeDasharray="1 1" /><circle cx="6" cy="6" r="3" stroke="#fff" strokeWidth="1.300" /><path d="M8 8l4 4" stroke="#fff" strokeWidth="2" /></Ico></StatusButton>
      <StatusButton aria-label="网格"><Ico w={12} h={12}><path d="M0 1.500h12M0 4.500h12M0 7.500h12M0 10.500h12M1.500 0v12M4.500 0v12M7.500 0v12M10.500 0v12" stroke="#fff" /></Ico></StatusButton>
    </StatusTools>
    <Grip><Ico w={12} h={11}><path d="M8 0h2v2H8zM4 4h2v2H4zM8 4h2v2H8zM0 8h2v2H0zM4 8h2v2H4zM8 8h2v2H8z" fill="#fff" /></Ico></Grip>
  </StatusBar>
);

export default function App() {
  return (
    <Window>
      <GlobalStyle />
      <TitleBar>
        <QuickAccess>
          <IconButton aria-label="亿图"><Logo /></IconButton>
          <IconButton aria-label="撤销"><Undo /></IconButton>
          <IconButton $w={9} aria-label="撤销选项"><Caret color="#bbb" /></IconButton>
          <IconButton aria-label="恢复"><Undo flip /></IconButton>
          <IconButton aria-label="新建"><NewDoc /></IconButton>
          <IconButton aria-label="打开"><OpenDoc /></IconButton>
          <IconButton aria-label="保存"><Save /></IconButton>
          <IconButton aria-label="打印"><Print /></IconButton>
          <IconButton aria-label="预览"><Preview /></IconButton>
          <IconButton $w={7} aria-label="预览选项"><Caret /></IconButton>
          <IconButton $w={16} aria-label="自定义"><Ico w={6} h={7}><path d="M0 .5h6" stroke={c.navy} /><path d="M0 3h6L3 6.500z" fill={c.navy} /></Ico></IconButton>
        </QuickAccess>
        <AppTitle>亿图图示</AppTitle>
        <WindowControls>
          <IconButton $w={36} $h={28} aria-label="最小化"><Ico w={7} h={6}><path d="M0 5h6" stroke="#666" strokeWidth="2" /></Ico></IconButton>
          <IconButton $w={36} $h={28} aria-label="最大化"><Ico w={10} h={10}><path d="M.5 1h9v8.500h-9z" stroke="#666" /></Ico></IconButton>
          <IconButton $w={36} $h={28} aria-label="关闭"><Close size={9} /></IconButton>
        </WindowControls>
      </TitleBar>
      <TabRow>
        <FileTab>文件</FileTab>
        <RibbonTab $active>开始</RibbonTab>
        {["插入", "页面布局", "视图", "符号", "帮助"].map((t) => <RibbonTab key={t}>{t}</RibbonTab>)}
        <TabRowEnd>
          <Share />
          <LoginLink href="#login">登录</LoginLink>
          <IconButton $w={28} aria-label="设置"><Gear /><Caret /></IconButton>
          <IconButton $w={14} aria-label="折叠功能区"><Collapse /></IconButton>
        </TabRowEnd>
      </TabRow>
      <RibbonBar />
      <Body>
        <LibraryPanel />
        <DocumentArea />
        <SideTools>
          {sideIcons.map(([name, icon]) => <SideTool key={name} aria-label={name}>{icon}</SideTool>)}
        </SideTools>
      </Body>
      <Status />
    </Window>
  );
}
